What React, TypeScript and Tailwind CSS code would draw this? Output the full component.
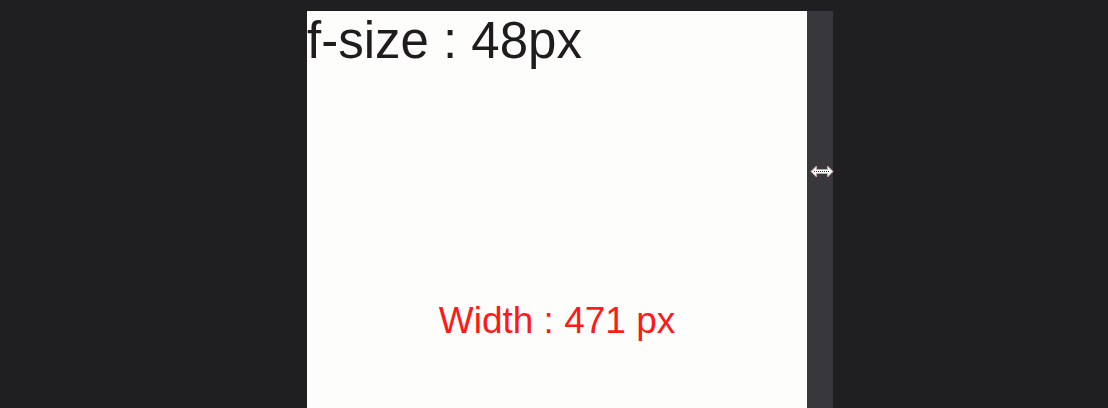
import React from 'react';

function ResizeCursor() {
  return (
    <svg
      className="absolute left-[810px] top-[165px]"
      width="24"
      height="13"
      viewBox="0 0 24 13"
    >
      <path
        d="M1 6.5 L6.5 1 L6.5 4.5 L17.5 4.5 L17.5 1 L23 6.5 L17.5 12 L17.5 8.5 L6.5 8.5 L6.5 12 Z"
        fill="#ffffff"
        stroke="#c9a5ac"
        strokeWidth="1"
        strokeLinejoin="miter"
      />
      <path d="M4 6.5 L20 6.5" stroke="#3a2f33" strokeWidth="1" strokeDasharray="1 1" />
    </svg>
  );
}

export default function App() {
  return (
    <div className="relative h-[408px] w-[1108px] overflow-hidden bg-[#1f1e21] pt-[11px] pl-[307px]">
      <div className="flex h-full">
        {/* Resizable preview panel */}
        <div className="flex w-[500px] flex-col bg-[#fdfefc]" style={{ fontFamily: '"Liberation Sans", Arial, sans-serif' }}>
          <p className="mt-[4px] text-[51px] leading-none text-[#201c1e]">f-size : 48px</p>
          <p className="mt-[236px] text-center text-[37px] leading-none text-[#ff1a1a]">Width : 471 px</p>
        </div>
        {/* Drag handle */}
        <div className="w-[26px] bg-[#38373c]" />
      </div>
      <ResizeCursor />
    </div>
  );
}
